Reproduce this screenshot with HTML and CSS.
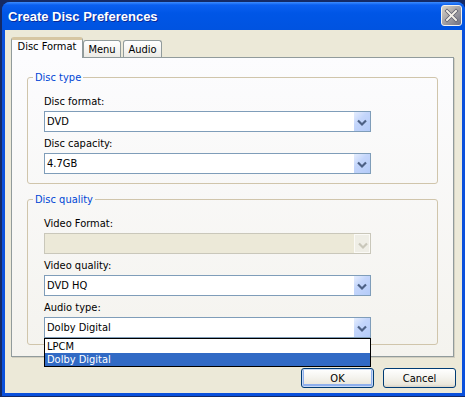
FILE: index.html
```html
<!DOCTYPE html>
<html lang="en">
<head>
  <meta charset="UTF-8" />
  <title>Create Disc Preferences</title>
  <link rel="stylesheet" href="styles.css">
</head>
<body>
  <div class="window">
    <div class="titlebar">
      <span class="title">Create Disc Preferences</span>
      <button class="close" aria-label="Close">
        <svg width="15" height="15" viewBox="0 0 15 15">
          <path d="M3 3 L12 12 M12 3 L3 12" stroke="#5a5a6a" stroke-width="3.4" stroke-linecap="square" />
          <path d="M3 3 L12 12 M12 3 L3 12" stroke="#f2eee6" stroke-width="2" stroke-linecap="square" />
        </svg>
      </button>
    </div>
    <div class="client">
      <div class="tabs">
        <div class="tab active">Disc Format</div>
        <div class="tab tab-menu">Menu</div>
        <div class="tab tab-audio">Audio</div>
      </div>
      <div class="panel">
        <fieldset class="group group-type">
          <legend>Disc type</legend>
          <div class="field">
            <label>Disc format:</label>
            <div class="combo">
              <span class="value">DVD</span>
              <span class="drop"><svg width="16" height="19" viewBox="0 0 16 19"><path d="M4 8.5 L8 12.5 L12 8.5" fill="none" stroke="#4d6185" stroke-width="2.2" /></svg></span>
            </div>
          </div>
          <div class="field">
            <label>Disc capacity:</label>
            <div class="combo">
              <span class="value">4.7GB</span>
              <span class="drop"><svg width="16" height="19" viewBox="0 0 16 19"><path d="M4 8.5 L8 12.5 L12 8.5" fill="none" stroke="#4d6185" stroke-width="2.2" /></svg></span>
            </div>
          </div>
        </fieldset>

        <fieldset class="group group-quality">
          <legend>Disc quality</legend>
          <div class="field">
            <label>Video Format:</label>
            <div class="combo disabled">
              <span class="value"></span>
              <span class="drop"><svg width="16" height="19" viewBox="0 0 16 19"><path d="M4 8.5 L8 12.5 L12 8.5" fill="none" stroke="#c9c7ba" stroke-width="2.2" /></svg></span>
            </div>
          </div>
          <div class="field">
            <label>Video quality:</label>
            <div class="combo">
              <span class="value">DVD HQ</span>
              <span class="drop"><svg width="16" height="19" viewBox="0 0 16 19"><path d="M4 8.5 L8 12.5 L12 8.5" fill="none" stroke="#4d6185" stroke-width="2.2" /></svg></span>
            </div>
          </div>
          <div class="field">
            <label>Audio type:</label>
            <div class="combo open">
              <span class="value">Dolby Digital</span>
              <span class="drop"><svg width="16" height="19" viewBox="0 0 16 19"><path d="M4 8.5 L8 12.5 L12 8.5" fill="none" stroke="#4d6185" stroke-width="2.2" /></svg></span>
              <ul class="dropdown">
                <li>LPCM</li>
                <li class="selected">Dolby Digital</li>
              </ul>
            </div>
          </div>
        </fieldset>
      </div>
      <div class="actions">
        <button class="btn default">OK</button>
        <button class="btn">Cancel</button>
      </div>
    </div>
  </div>
</body>
</html>
```

FILE: styles.css
```css
* {
  box-sizing: border-box;
}
body {
  margin: 0;
  height: 397px;
  overflow: hidden;
  background: #142a66;
  font-family: 'DejaVu Sans Condensed', 'Liberation Sans', Arial, sans-serif;
  font-size: 11px;
  color: #000;
}
.window {
  margin: 2px 0 0 2px;
  width: 463px;
  height: 394px;
  background: #0a50dc;
  border-radius: 8px 8px 0 0;
  display: flex;
  flex-direction: column;
}
.titlebar {
  height: 28px;
  flex: none;
  display: flex;
  align-items: flex-start;
  padding-left: 6px;
  border-radius: 8px 8px 0 0;
  background: linear-gradient(#3d8dff 0, #0a5ff0 3px, #0056e6 40%, #0053e0 100%);
}
.title {
  padding-top: 7px;
  color: #fff;
  font-family: 'Liberation Sans', Arial, sans-serif;
  font-weight: bold;
  font-size: 13px;
  line-height: 16px;
  text-shadow: 1px 1px 0 #0a2a9a;
}
.close {
  margin: 3px 3px 0 auto;
  width: 21px;
  height: 21px;
  padding: 0;
  border: 1px solid #f4f2ee;
  border-radius: 3px;
  background: linear-gradient(135deg, #d9d2c6 0%, #a9a6a8 45%, #6e7082 100%);
  display: flex;
  align-items: center;
  justify-content: center;
}
.client {
  flex: 1;
  margin: 0 3px 3px;
  padding: 7px 6px 5px;
  background: #ece9d8;
  display: flex;
  flex-direction: column;
}
.tabs {
  display: flex;
  align-items: flex-end;
  margin-bottom: -1px;
  position: relative;
  z-index: 1;
}
.tab {
  height: 17px;
  margin-bottom: 1px;
  padding-top: 2px;
  border: 1px solid #919b9c;
  border-bottom: none;
  border-radius: 3px 3px 0 0;
  background: linear-gradient(#fff, #ecebe6);
  text-align: center;
  line-height: 13px;
}
.tab.active {
  width: 72px;
  height: 21px;
  margin-bottom: 0;
  padding-top: 0;
  border-top: 3px solid #d6c6a2;
  background: #fcfcfe;
}
.tab-menu {
  width: 38px;
}
.tab-audio {
  width: 39px;
  margin-left: 2px;
}
.panel {
  width: 443px;
  height: 300px;
  border: 1px solid #919b9c;
  background: linear-gradient(#fcfcfe, #f4f3ee);
  box-shadow: 1px 1px 0 #d2cfc0;
}
.group {
  margin: 13px 0 0 15px;
  width: 411px;
  padding: 11px 0 9px 5px;
  border: 1px solid #d0c5ab;
  border-radius: 3px;
}
.group-quality {
  margin-top: 9px;
  padding-bottom: 6px;
}
.group legend {
  padding: 0 2px;
  line-height: 13px;
  color: #0046d5;
}
.field {
  margin-left: 11px;
}
.field + .field {
  margin-top: 5px;
}
.field label {
  display: block;
  line-height: 13px;
  margin-bottom: 3px;
}
.combo {
  position: relative;
  width: 327px;
  height: 21px;
  padding-left: 2px;
  border: 1px solid #7f9db9;
  background: #fff;
  display: flex;
  align-items: center;
}
.combo .value {
  flex: 1;
  line-height: 13px;
}
.drop {
  width: 16px;
  height: 19px;
  background: linear-gradient(135deg, #e6eefe 0%, #c4d6fb 40%, #b4cbf9 100%);
}
.drop svg {
  display: block;
}
.combo.disabled {
  border-color: #c9c7ba;
  background: #ece9d8;
}
.combo.disabled .drop {
  border: 1px solid #fbfaf6;
  background: #efeee6;
}
.dropdown {
  position: absolute;
  top: 20px;
  left: -1px;
  width: 327px;
  margin: 0;
  padding: 1px 0 0;
  list-style: none;
  border: 1px solid #000;
  background: #fff;
  z-index: 2;
}
.dropdown li {
  height: 13px;
  padding-left: 2px;
  line-height: 13px;
}
.dropdown li.selected {
  background: #316ac5;
  color: #fff;
}
.actions {
  display: flex;
  justify-content: flex-end;
  gap: 9px;
  margin-top: 11px;
}
.btn {
  width: 73px;
  height: 20px;
  padding: 0;
  border: 1px solid #003c74;
  border-radius: 3px;
  background: linear-gradient(#fff 0%, #f5f4ef 45%, #ebe8dc 85%, #d8d2c6 100%);
  font-family: inherit;
  font-size: 11px;
  color: #000;
}
.btn.default {
  box-shadow: inset 0 0 0 1px #c6d8f6, inset 0 -1px 0 2px #8fb0ec;
}
```
